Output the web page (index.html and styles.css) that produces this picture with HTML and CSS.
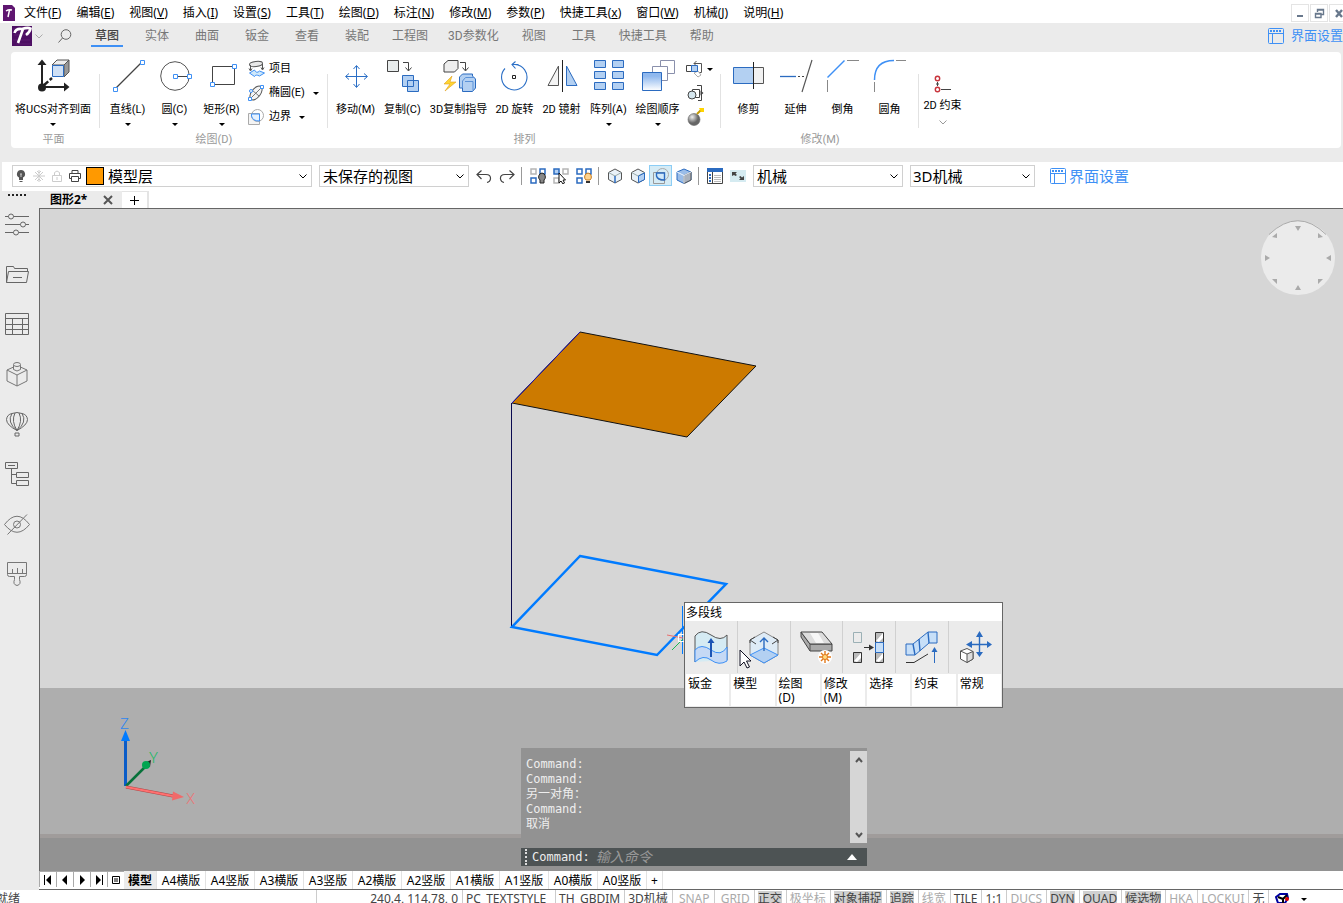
FILE: index.html
```html
<!DOCTYPE html>
<html lang="zh-CN">
<head>
  <meta charset="UTF-8">
  <meta name="viewport" content="width=device-width, initial-scale=1.0">
  <title>图形2</title>
  <link rel="stylesheet" href="styles.css">
</head>
<body>
  <svg class="defs" width="0" height="0">
    <symbol id="i-layout" viewBox="0 0 16 16"><g fill="none" stroke="#3e90f5"><rect x=".5" y=".5" width="15" height="15" rx="1"/><path d="M.5 5.500h15M4.500 5.500v10"/><path d="M2 3h12" stroke-width="2" stroke-dasharray="2 1"/></g></symbol>
    <symbol id="i-chev" viewBox="0 0 8 8"><path d="M.5 2.500L4 6l3.500-3.500" fill="none" stroke="currentColor"/></symbol>
    <symbol id="i-node" viewBox="0 0 5 5"><path d="M.5.5h4v4h-4z" fill="#fff" stroke="#3e90f5"/></symbol>
    <symbol id="i-cube" viewBox="0 0 16 16"><path d="M8 1l6.500 3.500v7L8 15l-6.500-3.500v-7z" fill="#e8f1f8" stroke="#555"/><path d="M1.500 4.500L8 8l6.500-3.500" fill="none" stroke="#9aa"/></symbol>
  </svg>

  <header>
    <nav class="menubar">
      <svg class="app-icon" width="12" height="16" viewBox="0 0 12 16"><path d="M0 0h9l3 3v13H0z" fill="#5f1670"/><path d="M3 6q3-2 6-1M6.500 5L5 12" stroke="#fff" stroke-width="1.500" fill="none"/></svg>
      <a href="#">文件(<u>F</u>)</a>
      <a href="#">编辑(<u>E</u>)</a>
      <a href="#">视图(<u>V</u>)</a>
      <a href="#">插入(<u>I</u>)</a>
      <a href="#">设置(<u>S</u>)</a>
      <a href="#">工具(<u>T</u>)</a>
      <a href="#">绘图(<u>D</u>)</a>
      <a href="#">标注(<u>N</u>)</a>
      <a href="#">修改(<u>M</u>)</a>
      <a href="#">参数(<u>P</u>)</a>
      <a href="#">快捷工具(<u>x</u>)</a>
      <a href="#">窗口(<u>W</u>)</a>
      <a href="#">机械(<u>J</u>)</a>
      <a href="#">说明(<u>H</u>)</a>
      <div class="win-buttons">
        <button aria-label="最小化"><svg width="16" height="16"><path d="M5 11h6" stroke="#68788c" stroke-width="2"/></svg></button>
        <button aria-label="还原"><svg width="16" height="16"><path d="M6.500 7V4.500h6v5H10M5 8.500h5v4H4.500v-4zM6 5h7M4 9h6" fill="none" stroke="#68788c" stroke-width="1.400"/></svg></button>
        <button aria-label="关闭"><svg width="16" height="16"><path d="M6 5l6 7M12 5l-6 7" stroke="#68788c" stroke-width="2.400"/></svg></button>
      </div>
    </nav>

    <nav class="ribbon-tabs">
      <svg class="logo" width="20" height="20" viewBox="0 0 20 20"><path d="M0 0h20v20H0z" fill="#4d0f63"/><path d="M1 3h18M2 9h16M1 14h17M4 18h15" stroke="#64277a" stroke-width=".6"/><path d="M2.500 7Q4 2 10 3q6-2 8.500-.5Q18 6 14 9M11 3L6 17" fill="none" stroke="#fff" stroke-width="2.600"/></svg>
      <svg class="logo-chev" width="8" height="8"><use href="#i-chev"/></svg>
      <svg class="search" width="14" height="14" viewBox="0 0 14 14"><g fill="none" stroke="#666"><circle cx="8" cy="5.500" r="4.800"/><path d="M4.500 9L.5 13.500"/></g></svg>
      <a href="#" class="active">草图</a>
      <a href="#">实体</a>
      <a href="#">曲面</a>
      <a href="#">钣金</a>
      <a href="#">查看</a>
      <a href="#">装配</a>
      <a href="#">工程图</a>
      <a href="#">3D参数化</a>
      <a href="#">视图</a>
      <a href="#">工具</a>
      <a href="#">快捷工具</a>
      <a href="#">帮助</a>
      <button class="ui-config"><svg width="16" height="16"><use href="#i-layout"/></svg>界面设置</button>
    </nav>

    <div class="ribbon">
      <section class="group g-plane">
        <div class="tools">
          <button class="tool">
            <svg width="36" height="36"><g stroke="#222" stroke-width="2" fill="none"><path d="M7 29V5M7 29h24"/><path d="M8 28l9-8" stroke-width="2.400" stroke-dasharray="7 2"/></g><path d="M2.500 7L7 1.500 11.500 7zM29 24.500l5.500 4.500-5.500 4.500z" fill="#222"/><circle cx="7" cy="29.500" r="4" fill="#222"/><path d="M17 7l5-5h12l-5 5z" fill="#eee" stroke="#555"/><path d="M29 7l5-5v12l-5 5z" fill="#999" stroke="#555"/><path d="M17.500 7.500h11v11h-11z" fill="#cfe0f5" stroke="#2b6bc0"/></svg>
            <span>将UCS对齐到面</span><i class="caret"></i>
          </button>
        </div>
        <h3>平面</h3>
      </section>

      <section class="group g-draw">
        <div class="tools">
          <button class="tool">
            <svg width="36" height="36"><path d="M5 31L32 4" stroke="#444" stroke-width="1.200"/><use href="#i-node" x="3" y="29" width="5" height="5"/><use href="#i-node" x="30" y="2" width="5" height="5"/></svg>
            <span>直线(L)</span><i class="caret"></i>
          </button>
          <button class="tool">
            <svg width="36" height="36"><circle cx="18" cy="18" r="14.300" fill="none" stroke="#555"/><path d="M19 18.500h13" stroke="#444"/><use href="#i-node" x="16" y="16" width="5" height="5"/><use href="#i-node" x="30" y="16" width="5" height="5"/></svg>
            <span>圆(C)</span><i class="caret"></i>
          </button>
          <button class="tool">
            <svg width="36" height="36"><path d="M8.500 8.500h22v18h-22z" fill="none" stroke="#444"/><use href="#i-node" x="6" y="24" width="5" height="5"/><use href="#i-node" x="28" y="6" width="5" height="5"/></svg>
            <span>矩形(R)</span><i class="caret"></i>
          </button>
          <div class="small-tools">
            <button><svg width="18" height="18"><ellipse cx="8" cy="4" rx="6.500" ry="2.500" fill="#e8e8e8" stroke="#555" transform="rotate(-6 8 4)"/><path d="M2.500 5v5M14.500 4v5M1 8.500L2.500 11 4 8.500M13 7.500l1.500 2.500L16 7.500" fill="none" stroke="#555"/><path d="M1.500 13l5-3q2 4 5 1l5 2-5 3q-4-2-5 .5z" fill="#cfe8fa" stroke="#3e90f5"/></svg>项目</button>
            <button><svg width="18" height="18"><ellipse cx="8" cy="9" rx="8" ry="4.500" fill="#f4f4f4" stroke="#555" transform="rotate(-52 8 9)"/><path d="M2 15L14 3M4 6l7 6" stroke="#777"/><g fill="#fff" stroke="#3e90f5"><path d="M.5 13.500h3v3h-3zM12.500 1.500h3v3h-3z"/><circle cx="3" cy="7" r="1.500"/></g></svg>椭圆(E)<i class="caret"></i></button>
            <button><svg width="18" height="18"><path d="M.5 5.500h11v11H.5z" fill="#f4f4f4" stroke="#aaa"/><circle cx="9.500" cy="7.500" r="6" fill="none" stroke="#aaa"/><path d="M3.500 6h8v7q-7 0-8-5z" fill="#e6f2ff" stroke="#3e90f5"/></svg>边界<i class="caret"></i></button>
          </div>
        </div>
        <h3>绘图(D)</h3>
      </section>

      <section class="group g-arrange">
        <div class="tools">
          <button class="tool">
            <svg width="36" height="36"><path d="M18.500 8v21M8 18.500h21M15.500 11l3-3.500 3 3.500M15.500 26l3 3.500 3-3.500M11 15.500l-3.500 3 3.500 3M26 15.500l3.500 3-3.500 3" fill="none" stroke="#2b6fc6"/></svg>
            <span>移动(M)</span>
          </button>
          <button class="tool">
            <svg width="36" height="36"><path d="M2.500 2.500h11v11h-11z" fill="#e9eded" stroke="#444"/><path d="M18 4.500h5.500v8M20.500 9.500l3 3.500 3-3.500" fill="none" stroke="#444"/><path d="M17.500 17.500h11v11h-11zM22.500 22.500h11v11h-11z" fill="#b3d0f2" stroke="#2b6bc0"/></svg>
            <span>复制(C)</span>
          </button>
          <button class="tool wide">
            <svg width="36" height="36"><path d="M3 6l4-3.500h10v8L13.500 14H3z" fill="#eee" stroke="#444"/><path d="M19 4.500h5.500v8M21.500 9.500l3 3.500 3-3.500" fill="none" stroke="#444"/><path d="M11 18L3 26h6l-5 7L15 24H9z" fill="#ffd633" stroke="#e0a020" stroke-width=".6"/><path d="M18.500 19l3-3h10v2l3 3v9l-3 3.500H21.500V30h-3z" fill="#b3d0f2" stroke="#2b6bc0"/><path d="M21.500 30v-7l3-3.500h9M24 23.500h8v9" fill="none" stroke="#5b92d8"/></svg>
            <span>3D复制指导</span>
          </button>
          <button class="tool">
            <svg width="36" height="36"><path d="M8 10.500A12.700 12.700 0 1 0 18 6.500M15 6.500h6.500M18.500 3.500L15 6.500l3.500 4" fill="none" stroke="#2b6fc6" stroke-width="1.100"/><path d="M15.500 17.500h3v3h-3z" fill="none" stroke="#222"/></svg>
            <span>2D 旋转</span>
          </button>
          <button class="tool">
            <svg width="36" height="36"><path d="M4 27.500h10.500V8z" fill="#f4f4f4" stroke="#555"/><path d="M18.500 2v32" stroke="#222"/><path d="M33 27.500H22.500V8z" fill="#b3d0f2" stroke="#2b6bc0"/></svg>
            <span>2D 镜射</span>
          </button>
          <button class="tool">
            <svg width="36" height="36"><path d="M3.500 2.500h11v7h-11zM21.500 2.500h11v7h-11zM3.500 13.500h11v7h-11zM21.500 13.500h11v7h-11zM3.500 24.500h11v7h-11zM21.500 24.500h11v7h-11z" fill="#b3d0f2" stroke="#2b6bc0"/></svg>
            <span>阵列(A)</span><i class="caret"></i>
          </button>
          <button class="tool order">
            <svg width="36" height="36"><defs><linearGradient id="og" x1="0" y1="0" x2="0" y2="1"><stop offset=".2" stop-color="#8fb8ee"/><stop offset="1" stop-color="#fff"/></linearGradient></defs><path d="M20.500 2.500h14v13h-14z" fill="#fff" stroke="#8a90ac"/><path d="M12.500 8.500h15v14h-15z" fill="#fff" stroke="#8a90ac"/><path d="M2.500 14.500h19v18h-19z" fill="url(#og)" stroke="#2b6bc0"/></svg>
            <span>绘图顺序</span><i class="caret"></i>
          </button>
          <div class="small-tools">
            <button aria-label="拉伸"><svg width="18" height="18"><path d="M.5 5.500h5v6h-5z" fill="#fff" stroke="#444"/><path d="M8 3.500h7.500v9H13M10.500 1L8 3.500l3 3" fill="none" stroke="#555"/><path d="M8 13l4-2 3 4-3 2z" fill="#fff" stroke="#aaa"/><path d="M5.500 5.500h6v6h-6z" fill="#b3d0f2" stroke="#2b6bc0"/></svg><i class="caret"></i></button>
            <button aria-label="偏移"><svg width="18" height="18"><path d="M6.500 5.500h7v8h-7zM11 1.500h4.500v15H12" fill="none" stroke="#444"/><circle cx="6" cy="11" r="4" fill="#d5e6ee" stroke="#444"/><path d="M14.500 6.500l3 2.500-3 2.500z" fill="#444"/></svg></button>
            <button aria-label="分解"><svg width="18" height="18"><defs><radialGradient id="bomb" cx=".35" cy=".3"><stop offset="0" stop-color="#eee"/><stop offset="1" stop-color="#666"/></radialGradient></defs><circle cx="8" cy="11.500" r="6" fill="url(#bomb)" stroke="#666" stroke-width=".6"/><path d="M11 6l4-4" stroke="#c49a00" stroke-width="2"/><path d="M13 0h5v4h-3z" fill="#ffd400"/></svg></button>
          </div>
        </div>
        <h3>排列</h3>
      </section>

      <section class="group g-modify">
        <div class="tools">
          <button class="tool">
            <svg width="36" height="36"><path d="M22 9.500h10.500v16H22z" fill="#f1f1f1" stroke="#555"/><path d="M2.500 9.500h20v16h-20z" fill="#b3d0f2" stroke="#2b6bc0"/><path d="M22.500 4v27" stroke="#222"/></svg>
            <span>修剪</span>
          </button>
          <button class="tool">
            <svg width="36" height="36"><path d="M2 18.500h16" stroke="#2b6bc0" stroke-width="1.300"/><path d="M20 18.500h6" stroke="#444" stroke-dasharray="2 2"/><path d="M24 34L34 2" stroke="#555" stroke-width="1.200"/></svg>
            <span>延伸</span>
          </button>
          <button class="tool">
            <svg width="36" height="36"><path d="M2.500 19.500L19.500 2.500" stroke="#3e90f5" stroke-width="1.500"/><path d="M22 2.500h12M2.500 22v12" stroke="#888"/></svg>
            <span>倒角</span>
          </button>
          <button class="tool">
            <svg width="36" height="36"><path d="M2.500 22Q2.500 2.500 22 2.500" fill="none" stroke="#3e90f5" stroke-width="1.500"/><path d="M24 2.500h10M2.500 24v10" stroke="#888"/></svg>
            <span>圆角</span>
          </button>
        </div>
        <h3>修改(M)</h3>
      </section>

      <section class="group g-constraint">
        <div class="tools">
          <button class="tool short">
            <svg width="36" height="36"><g fill="#fff" stroke="#c8343c" stroke-width="1.400"><circle cx="12.500" cy="20.500" r="2.200"/><circle cx="12.500" cy="31.500" r="2.200"/></g><path d="M12.500 24v4M11 26h3M16 31.500h10" stroke="#444"/></svg>
            <span>2D 约束</span>
            <svg class="more" width="8" height="8"><use href="#i-chev"/></svg>
          </button>
        </div>
      </section>
    </div>

    <div class="toolbar">
      <div class="combo layer">
        <svg width="10" height="14" viewBox="0 0 10 14"><path d="M5 1a4 4 0 0 1 2 7.500V11H3V8.500A4 4 0 0 1 5 1z" fill="#555"/><path d="M3.500 12.500h3" stroke="#555"/><path d="M4 5h2M5 5v3" stroke="#ccc"/></svg>
        <svg width="12" height="12"><path d="M6 0v12M0 6h12M2 2l8 8M10 2l-8 8M4 1l2 2 2-2M4 11l2-2 2 2" fill="none" stroke="#ccc"/></svg>
        <svg width="10" height="12"><path d="M.5 5.500h9v6h-9zM2.500 5V2.500q2.500-3 5 0V5M5 7v3" fill="none" stroke="#ccc"/></svg>
        <svg width="12" height="12"><path d="M3 3.500v-3h6v3M2.500 8.500h-2v-5h11v5h-2M2.500 6.500h7v5h-7z" fill="none" stroke="#444"/></svg>
        <span class="swatch"></span>
        <select aria-label="图层"><option>模型层</option></select>
        <svg class="arrow" width="8" height="8"><use href="#i-chev"/></svg>
      </div>
      <div class="combo view"><select aria-label="视图"><option>未保存的视图</option></select><svg class="arrow" width="8" height="8"><use href="#i-chev"/></svg></div>
      <div class="icons">
        <button aria-label="撤消"><svg width="16" height="16"><path d="M5.500 2.500L1 6.500l4.500 4.500M1.500 6.500H10q5 0 4.500 4.500-.5 3-3.500 3.500" fill="none" stroke="#444" stroke-width="1.200"/></svg></button>
        <button aria-label="重做"><svg width="16" height="16"><path d="M10.500 2.500L15 6.500 10.500 11M14.500 6.500H6q-5 0-4.500 4.500.5 3 3.500 3.500" fill="none" stroke="#444" stroke-width="1.200"/></svg></button>
      </div>
      <div class="icons">
        <button aria-label="隔离"><svg width="16" height="16"><g fill="#fff" stroke="#b5b5b5" stroke-width="1.500"><path d="M1 1h5v5H1z"/><path d="M10 1h5v5h-5zM1 10h5v5H1z" stroke="#2b6bc0"/></g><path d="M12 5a4 4 0 0 1 2 7v3h-4v-3a4 4 0 0 1 2-7z" fill="#888" stroke="#222"/></svg></button>
        <button aria-label="隐藏"><svg width="16" height="16"><g fill="#fff" stroke="#b5b5b5" stroke-width="1.500"><path d="M1 1h5v5H1z" fill="#b3d0f2" stroke="#2b6bc0"/><path d="M10 1h5v5h-5zM1 10h5v5H1z"/></g><path d="M6 5v10l2-2 2 3 1.500-1-1.500-3h2.500z" fill="#fff" stroke="#111"/></svg></button>
        <button aria-label="全部显示"><svg width="16" height="16"><path d="M1 1h5v5H1zM10 1h5v5h-5zM1 10h5v5H1z" fill="#fff" stroke="#2b6bc0" stroke-width="1.500"/><path d="M12 5a4 4 0 0 1 2 7h-4a4 4 0 0 1 2-7z" fill="#ffd490" stroke="#c67a1c"/><path d="M10 13h4v2h-4z" fill="#333"/></svg></button>
      </div>
      <div class="icons">
        <button aria-label="选择边"><svg width="16" height="16"><use href="#i-cube"/><path d="M8 8v7" stroke="#2b6bc0" stroke-width="1.500"/></svg></button>
        <button aria-label="选择面"><svg width="16" height="16"><use href="#i-cube"/><path d="M8.500 8L14.500 5v6.500l-6 3z" fill="#b3d0f2" stroke="#2b6bc0"/></svg></button>
        <button aria-label="检测边界" class="on"><svg width="16" height="16"><path d="M.5 4.500h11v11H.5z" fill="none" stroke="#999"/><circle cx="9.500" cy="6.500" r="6" fill="none" stroke="#aaa"/><path d="M3.500 5h8v7q-7 0-8-4z" fill="#d0e8fa" stroke="#2b6bc0" stroke-width="1.400"/></svg></button>
        <button aria-label="选择实体"><svg width="16" height="16"><path d="M8 1l7 3v8l-7 3.500L1 12V4z" fill="#9bbde8" stroke="#2b6bc0"/><path d="M8 7.500l7-3.500v8l-7 3.500z" fill="#aab2bd" stroke="#555"/><path d="M1 4l7 3.500L15 4M8 7.500v8" fill="none" stroke="#eef5ff"/></svg></button>
      </div>
      <div class="icons">
        <button aria-label="特性面板"><svg width="16" height="16"><path d="M.5.5h15v15H.5z" fill="#fff" stroke="#444"/><path d="M0 0h16v4H0z" fill="#2b6bc0"/><path d="M2 7h2M2 10h2M2 13h2" stroke="#2b6bc0" stroke-width="2"/><path d="M5.500 4v11" stroke="#444"/><path d="M7 7.500h7M7 9.500h7M7 11.500h7M7 13.500h7" stroke="#bbb"/></svg></button>
        <button aria-label="全屏"><svg width="16" height="16"><path d="M0 2h16v12H0z" fill="#d5ebf1"/><path d="M2 4h5L5.500 5.500 7 7 5.500 8 4 7 2 8zM14 12H9l1.500-1.500L9 9l1.500-1L12 9.500 14 8z" fill="#444"/></svg></button>
      </div>
      <div class="combo space"><select aria-label="行业"><option>机械</option></select><svg class="arrow" width="8" height="8"><use href="#i-chev"/></svg></div>
      <div class="combo workspace"><select aria-label="工作空间"><option>3D机械</option></select><svg class="arrow" width="8" height="8"><use href="#i-chev"/></svg></div>
      <button class="ui-config large"><svg width="16" height="16"><use href="#i-layout"/></svg>界面设置</button>
    </div>
  </header>

  <main>
    <aside class="sidebar">
      <div class="grip"></div>
      <button aria-label="特性"><svg width="26" height="26"><g fill="#ebebeb" stroke="#666"><path d="M1 5.500h24M1 13.500h24M1 21.500h24"/><circle cx="7" cy="5.500" r="2.500"/><circle cx="19" cy="13.500" r="2.500"/><circle cx="12" cy="21.500" r="2.500"/></g></svg></button>
      <button aria-label="文件夹"><svg width="26" height="26"><path d="M2.500 21.500v-16h7l1 2h13v3M2.500 21.500l2-11h20l-2 11zM9 16.500h9" fill="none" stroke="#666"/></svg></button>
      <button aria-label="表格"><svg width="26" height="26"><path d="M1.500 2.500h23v21h-23zM1.500 7.500h23M1.500 13.500h23M1.500 18.500h23M8.500 7v16M18.500 7v16" fill="none" stroke="#666"/></svg></button>
      <button aria-label="组件"><svg width="26" height="26"><path d="M13 4.500l10 4.500v11l-10 5-10-5V9zM3 9l10 5 10-5M13 14v11" fill="#ebebeb" stroke="#777"/><path d="M9.500 4v4.500q3.500 3 7 0V4" fill="#ebebeb" stroke="#777"/><ellipse cx="13" cy="3.500" rx="3.500" ry="2" fill="#ebebeb" stroke="#777"/></svg></button>
      <button aria-label="渲染"><svg width="26" height="26"><path d="M13 19.500Q2.500 14 2.500 8.500 3 3.500 8 2.500q5-2 10 0 5 1 5.500 6Q23.500 14 13 19.500zM8 2.500Q2.500 11 13 19.500 7 10 11 2M18 2.500q5.500 8.500-5 17 6-9.500 2-17.500M11 22h4v3h-4z" fill="none" stroke="#666"/></svg></button>
      <button aria-label="结构"><svg width="26" height="26"><path d="M1.500 1.500h12v6h-12zM4 4.500h7M7.500 8v14.500h5M7.500 13.500h5M12.500 11.500h12v5h-12zM12.500 19.500h12v5h-12z" fill="none" stroke="#666"/></svg></button>
      <button aria-label="可见性"><svg width="26" height="26"><path d="M.5 13.500Q13-3 25.500 13.500 13 29 .5 13.500zM3.500 23.500L23 3.500" fill="none" stroke="#777"/><circle cx="13" cy="13.500" r="3.500" fill="none" stroke="#777"/></svg></button>
      <button aria-label="材质"><svg width="26" height="26"><path d="M3.500 1.500h19v12q0 2-2 2h-5v3q2 5-2.500 6-4.500-1-2.500-6v-3h-5q-2 0-2-2zM3.500 12.500h19M8.500 12V8M13.500 12V7M18.500 12V8" fill="none" stroke="#777"/></svg></button>
    </aside>

    <div class="document">
      <div class="doc-tabs">
        <div class="doc-tab"><a href="#">图形2*</a><button aria-label="关闭图形"><svg width="10" height="10"><path d="M1 1l8 8M9 1L1 9" stroke="#555" stroke-width="2"/></svg></button></div>
        <button class="new-tab" aria-label="新建"><svg width="9" height="9"><path d="M4.500 0v9M0 4.500h9" stroke="#000"/></svg></button>
      </div>

      <div class="canvas">
        <svg class="scene" width="760" height="620">
          <path d="M540 123l176 34-69 71-175-34z" fill="#cc7a00" stroke="#111"/>
          <path d="M540 123l-68 71" stroke="#2010b0"/>
          <path d="M471.500 194v224" stroke="#0a0a50"/>
          <path d="M540 347l146 28-69 71-145-28z" fill="none" stroke="#007bff" stroke-width="2.500"/>
          <path d="M642.500 397v48" stroke="#007bff"/>
          <path d="M627 426l16 3" stroke="#e87070"/>
          <path d="M632 441l11-11" stroke="#1db954"/>
          <path d="M638.500 425.500h7v7h-7z" fill="none" stroke="#fff"/>
          <!-- UCS axes -->
          <path d="M85.500 577V529" stroke="#0a5cc8" stroke-width="3"/>
          <path d="M81 532l4.500-11 4.500 11z" fill="#007bff"/>
          <path d="M86 577l19-19" stroke="#07713a" stroke-width="2.500"/>
          <path d="M104 554l7-3-1 7z" fill="#222"/><circle cx="106" cy="556" r="4" fill="#00a550"/>
          <path d="M86 578l47 9" stroke="#b04848" stroke-width="3"/><path d="M86 578l47 9" stroke="#ff7070" stroke-width="2"/>
          <path d="M133 582.500l11 5.500-12 3.500z" fill="#f06a6a"/>
          <text class="axis-z" x="80" y="520">Z</text>
          <text class="axis-y" x="109" y="554">Y</text>
          <text class="axis-x" x="146" y="595">X</text>
        </svg>

        <svg class="look-from" width="76" height="76" viewBox="0 0 76 76"><circle cx="38" cy="38" r="37" fill="#ebebeb"/><path d="M9 14.500Q38-13 66 14.500" fill="none" stroke="#aaa"/><path d="M35 6h6l-3 5zM35 70h6l-3-5zM5 35v6l5-3zM71 35v6l-5-3zM12 17l5-4v5zM63 17l-5-4v5zM12 59h5v5zM63 59h-5v5z" fill="#aaa"/></svg>

        <div class="quad">
          <h2>多段线</h2>
          <div class="quad-tools">
            <button aria-label="放样"><svg width="36" height="36"><path d="M2 33V7Q8-1 18 6t16 0v25" fill="#d5ebf3" stroke="#555"/><path d="M2 33V21q6-7 16 0t16-3v14q-8 5-16-1T2 33z" fill="#c5d9f5" stroke="#3e90f5"/><path d="M18 28V13" stroke="#1c55b4" stroke-width="2"/><path d="M14.500 14L18 9l3.500 5z" fill="#1c55b4"/></svg></button>
            <button aria-label="拉伸"><svg width="36" height="36"><path d="M18 3l14 8v15l-14 8-14-8V11z" fill="#deebf6" stroke="#888"/><path d="M4 26l14-7 14 7-14 8z" fill="#b3d0f2" stroke="#3e90f5"/><path d="M4 11l6 4M32 11l-6 4M4 14v-3l5-3M32 14v-3l-5-3" fill="none" stroke="#444"/><path d="M18 22V9M14 13l4-4 4 4" fill="none" stroke="#2b6bc0" stroke-width="1.400"/></svg></button>
            <button aria-label="创建实体"><svg width="36" height="36"><path d="M2 3l9 12h22v7H11L2 8z" fill="#aaa" stroke="#444"/><path d="M2 3h21l10 12H11z" fill="#ddd" stroke="#444"/><path d="M11 15v7" stroke="#555"/><path d="M11 4l6 10h8L19 4z" fill="#f7f7f7"/><circle cx="26" cy="28" r="7" fill="#fff"/><path d="M26 22v12M20 28h12M22 24l8 8M30 24l-8 8" stroke="#e27a1c" stroke-width="1.400"/><circle cx="26" cy="28" r="2.500" fill="#ffdb82" stroke="#e27a1c"/></svg></button>
            <button aria-label="阵列选择"><svg width="36" height="36"><path d="M2.500 3.500h8v10h-8z" fill="none" stroke="#9bb0b5"/><path d="M2.500 23.500h8v10h-8zM24.500 3.500h8v10h-8zM24.500 23.500h8v10h-8z" fill="#bbb" stroke="#333"/><path d="M3 32l7-8v5l-4 4zM25 12l7-8v5l-4 4zM25 32l7-8v5l-4 4z" fill="#fff"/><path d="M24.500 13.500h8v10h-8z" fill="#c7dff8" stroke="#2b6bc0"/><path d="M13 18.500h7" stroke="#333"/><path d="M18 15.500l5 3-5 3z" fill="#333"/></svg></button>
            <button aria-label="钣金弯边"><svg width="36" height="36"><path d="M2 15h7L24 3h9v11h-8L11 26H2z" fill="#c7dff8" stroke="#2b6bc0"/><path d="M9 15l2 11M15 10l1 12M24 3l1 11" stroke="#2b6bc0" stroke-width="1.400"/><path d="M2 33.500h8L24 25" fill="none" stroke="#333"/><path d="M30.500 34V21" stroke="#2b6bc0"/><path d="M27.500 23l3-5 3 5z" fill="#2b6bc0"/></svg></button>
            <button aria-label="移动"><svg width="36" height="36"><path d="M21.500 5v20M11 15.500h21" stroke="#2b6bc0" stroke-width="1.400"/><path d="M18 8l3.500-6L25 8zM18 23l3.500 5 3.500-5zM14 12l-6 3.500 6 3.500zM29 12l5 3.500-5 3.500z" fill="#2b6bc0"/><path d="M2.500 22L9 19.500l6 3V30l-6 3.500L2.500 30z" fill="#fff" stroke="#555"/><path d="M2.500 22L9 25l6-2.500V30l-6 3.500V25" fill="#ddd" stroke="#555"/></svg></button>
          </div>
          <div class="quad-tabs">
            <button>钣金</button>
            <button>模型</button>
            <button>绘图<br>(D)</button>
            <button>修改<br>(M)</button>
            <button>选择</button>
            <button>约束</button>
            <button>常规</button>
          </div>
        </div>

        <svg class="pointer" width="13" height="20"><path d="M1 1v16l4-4 3 6 2.500-1-3-6H12z" fill="#fff" stroke="#112"/></svg>

        <div class="command">
          <div class="history">
            <pre>Command:
Command:
另一对角：
Command:
取消</pre>
            <div class="scroll">
              <svg width="8" height="8"><path d="M1 6l3-3.500L7 6" fill="none" stroke="#555" stroke-width="2"/></svg>
              <svg width="8" height="8"><path d="M1 2l3 3.500L7 2" fill="none" stroke="#555" stroke-width="2"/></svg>
            </div>
          </div>
          <div class="prompt">
            <label for="cmd">Command:</label>
            <input id="cmd" type="text" placeholder="输入命令">
            <svg width="10" height="6"><path d="M0 6l5-6 5 6z" fill="#fff"/></svg>
          </div>
        </div>
      </div>

      <nav class="layout-tabs">
        <button aria-label="第一个"><svg width="10" height="10"><path d="M1.500 0v10" stroke="#000"/><path d="M8 0v10L3 5z"/></svg></button>
        <button aria-label="上一个"><svg width="10" height="10"><path d="M7 0v10L2 5z"/></svg></button>
        <button aria-label="下一个"><svg width="10" height="10"><path d="M3 0v10l5-5z"/></svg></button>
        <button aria-label="最后一个"><svg width="10" height="10"><path d="M8.500 0v10" stroke="#000"/><path d="M2 0v10l5-5z"/></svg></button>
        <button aria-label="列表"><svg width="10" height="10"><path d="M1.500 1.500h7v7h-7zM3 4h4M3 6h4" fill="none" stroke="#000"/></svg></button>
        <a href="#" class="active">模型</a>
        <a href="#">A4横版</a>
        <a href="#">A4竖版</a>
        <a href="#">A3横版</a>
        <a href="#">A3竖版</a>
        <a href="#">A2横版</a>
        <a href="#">A2竖版</a>
        <a href="#">A1横版</a>
        <a href="#">A1竖版</a>
        <a href="#">A0横版</a>
        <a href="#">A0竖版</a>
        <a href="#" class="add">+</a>
      </nav>
    </div>
  </main>

  <footer class="status">
    <span class="ready">就绪</span>
    <span class="coords">240.4, 114.78, 0</span>
    <button class="text-style">PC_TEXTSTYLE</button>
    <button>TH_GBDIM</button>
    <button>3D机械</button>
    <button class="off">&nbsp;SNAP</button>
    <button class="off">&nbsp;GRID</button>
    <button class="on"><b>正交</b></button>
    <button class="off">极坐标</button>
    <button class="on"><b>对象捕捉</b></button>
    <button class="on"><b>追踪</b></button>
    <button class="off">线宽</button>
    <button>TILE</button>
    <button>1:1</button>
    <button class="off">DUCS</button>
    <button class="on"><b>DYN</b></button>
    <button class="on"><b>QUAD</b></button>
    <button class="on"><b>候选物</b></button>
    <button class="off">HKA</button>
    <button class="off">LOCKUI</button>
    <button>无</button>
    <button class="tips" aria-label="提示"><svg width="14" height="12"><path d="M1 4l4-3h7l1 4-3 5H3z" fill="#fff" stroke="#0000a0" stroke-width="2"/><path d="M3 4l5 2v4M8 6l4-4" fill="none" stroke="#000" stroke-width="2"/><circle cx="12" cy="6" r="2" fill="#e00000"/></svg></button>
    <button class="menu" aria-label="菜单"><i class="caret"></i></button>
  </footer>
</body>
</html>
```

FILE: styles.css
```css
* {
  box-sizing: border-box;
}
body {
  margin: 0;
  height: 100vh;
  display: flex;
  flex-direction: column;
  overflow: hidden;
  background: #ebebeb;
  color: #000;
  font-family: "Noto Sans", "Noto Sans CJK SC", sans-serif;
  font-size: 12px;
  line-height: 16px;
}
a {
  color: inherit;
  text-decoration: none;
}
button, select, input {
  font: inherit;
  color: inherit;
  background: none;
  border: none;
  border-radius: 0;
  padding: 0;
  margin: 0;
}
svg {
  display: block;
  flex: none;
}
h2, h3, pre {
  margin: 0;
  font: inherit;
}
.defs {
  position: absolute;
}
.caret {
  border: 3px solid transparent;
  border-top-color: #000;
  border-bottom: none;
}

/* menu bar */
.menubar {
  display: flex;
  align-items: center;
  gap: 15px;
  height: 23px;
  padding-left: 3px;
  padding-top: 2px;
  background: #fff;
  overflow: hidden;
  white-space: nowrap;
}
.app-icon {
  margin-right: -6px;
}
.win-buttons {
  display: flex;
  gap: 1px;
  margin-left: auto;
  margin-right: -4px;
}
.win-buttons button {
  border: 1px solid #e4e4e4;
}

/* ribbon */
.ribbon-tabs {
  display: flex;
  align-items: center;
  height: 29px;
  padding: 0 0 4px 12px;
  color: #777;
  white-space: nowrap;
  overflow: hidden;
  font-family: Roboto, "Noto Sans CJK SC", sans-serif;
}
.logo-chev {
  margin-left: 3px;
  color: #aaa;
}
.search {
  margin: 0 10px 0 15px;
}
.ribbon-tabs a {
  min-width: 50px;
  height: 22px;
  padding: 3px 10px 0;
  text-align: center;
}
.ribbon-tabs .active {
  color: #444;
  font-weight: 500;
  padding: 3px 4px 0;
  min-width: 32px;
  margin: 0 9px;
  border-bottom: 2px solid #3e90f5;
}
.ui-config {
  display: flex;
  align-items: center;
  gap: 7px;
  margin-left: auto;
  color: #3e90f5;
  font-size: 13px;
}
.ui-config.large {
  gap: 3px;
  margin-left: 15px;
  font-size: 15px;
}
.ribbon {
  display: flex;
  height: 96px;
  margin: 0 2px 0 11px;
  background: #fff;
  border-radius: 4px;
  font-family: Roboto, "Noto Sans CJK SC", sans-serif;
  font-size: 11px;
  white-space: nowrap;
}
.group {
  display: flex;
  flex-direction: column;
  justify-content: space-between;
  padding: 6px 4px 0;
  background: linear-gradient(#e2e2e2, #e2e2e2) right 22px / 1px 54px no-repeat;
}
.group h3 {
  color: #999;
  text-align: center;
}
.g-plane {
  width: 89px;
  padding-left: 0;
}
.g-draw {
  width: 228px;
}
.g-arrange {
  width: 393px;
}
.g-modify {
  width: 198px;
}
.g-constraint {
  background: none;
  padding-left: 0;
}
.tools {
  display: flex;
}
.tool {
  display: flex;
  flex-direction: column;
  align-items: center;
  width: 47px;
}
.g-plane .tool {
  width: 84px;
}
.tool span {
  margin-top: 8px;
}
.tool .caret {
  margin-top: 5px;
}
.tool.wide {
  width: 65px;
}
.tool.order {
  width: 51px;
}
.tool.short span {
  margin-top: 4px;
}
.more {
  margin-top: 4px;
  color: #999;
}
.small-tools {
  display: flex;
  flex-direction: column;
  gap: 6px;
  padding: 2px 0 0 3px;
}
.small-tools button {
  display: flex;
  align-items: center;
  gap: 3px;
}
.small-tools .caret {
  margin-left: 5px;
}
.g-arrange .small-tools .caret {
  margin-left: 0;
}

/* toolbar */
.toolbar {
  display: flex;
  align-items: center;
  height: 29px;
  margin: 14px 0 0 2px;
  padding: 0 0 2px 10px;
  background: #fff;
  white-space: nowrap;
}
.combo {
  display: flex;
  align-items: center;
  height: 22px;
  margin-right: 7px;
  padding: 0 4px 0 3px;
  border: 1px solid #d0d0d0;
}
.combo select {
  flex: 1;
  min-width: 0;
  height: 20px;
  appearance: none;
  font-size: 15px;
  line-height: 20px;
}
.combo.layer {
  width: 300px;
  gap: 7px;
}
.combo.layer select {
  margin-left: -3px;
}
.combo.view {
  width: 150px;
  margin-right: 3px;
}
.combo.space {
  width: 150px;
  margin-left: 1px;
}
.combo.workspace {
  width: 125px;
  margin-right: 0;
  padding-left: 2px;
}
.swatch {
  width: 18px;
  height: 18px;
  margin-left: -2px;
  background: #f90;
  border: 1px solid #000;
}
.icons {
  display: flex;
  padding-right: 3px;
}
.icons + .icons {
  padding-left: 5px;
  background: linear-gradient(#999, #999) left center / 1px 18px no-repeat;
}
.icons button {
  display: flex;
  align-items: center;
  justify-content: center;
  width: 23px;
  height: 21px;
  border: 1px solid transparent;
}
.icons .on {
  background: #d5ebf5;
  border-color: #8ccdf5;
}

/* work area */
main {
  flex: 1;
  display: flex;
  min-height: 0;
}
.sidebar {
  width: 39px;
  padding: 3px 4px;
}
.grip {
  width: 18px;
  margin: 0 4px 15px;
  border-top: 2px dotted #222;
}
.sidebar button {
  display: block;
  height: 26px;
  margin-bottom: 24px;
}
.document {
  flex: 1;
  display: flex;
  flex-direction: column;
  min-width: 0;
}
.doc-tabs {
  display: flex;
  height: 17px;
  background: #fff;
}
.doc-tab {
  display: flex;
  align-items: center;
  justify-content: space-between;
  width: 83px;
  padding: 0 9px 0 11px;
  background: #ebebeb;
  font-weight: bold;
}
.new-tab {
  display: flex;
  align-items: center;
  justify-content: center;
  width: 27px;
  border: 1px solid #e4e4e4;
  border-width: 1px 2px 0 0;
}
.canvas {
  position: relative;
  flex: 1;
  border: 1px solid #666;
  border-width: 1px 0 0 1px;
  overflow: hidden;
  background: linear-gradient(#d6d6d6 72.4%, #aeaeae 72.4%, #aeaeae 94.4%, #a09c9b 94.4%, #a09c9b 95%, #929292 95%);
}
.scene {
  position: absolute;
  left: 0;
  top: 0;
}
.scene text {
  font-size: 15px;
  font-weight: 300;
  font-family: Roboto, sans-serif;
}
.axis-z {
  fill: #2f86ee;
}
.axis-y {
  fill: #22b865;
}
.axis-x {
  fill: #e87878;
}
.look-from {
  position: absolute;
  right: 7px;
  top: 11px;
}

/* quad cursor menu */
.quad {
  position: absolute;
  left: 644px;
  top: 393px;
  width: 319px;
  border: 1px solid #666;
  background: #ebebeb;
}
.quad h2 {
  height: 18px;
  padding: 2px 1px 0;
  background: #fff;
}
.quad-tools {
  display: grid;
  grid-template-columns: repeat(6, 1fr);
  height: 52px;
}
.quad-tools button {
  display: flex;
  align-items: center;
  justify-content: center;
  border-right: 1px solid #d0d0d0;
}
.quad-tools button:last-child {
  border-right: none;
}
.quad-tabs {
  display: grid;
  grid-template-columns: repeat(7, 1fr);
  gap: 2px;
  padding: 1px;
}
.quad-tabs button {
  display: flex;
  align-items: flex-start;
  height: 32px;
  padding: 3px 2px 0;
  background: #fff;
  line-height: 14px;
  text-align: left;
}
.pointer {
  position: absolute;
  left: 699px;
  top: 440px;
}

/* command line */
.command {
  position: absolute;
  left: 481px;
  bottom: 5px;
  width: 346px;
  font-family: "DejaVu Sans Mono", "Noto Sans CJK SC", monospace;
  color: #eee;
}
.history {
  display: flex;
  justify-content: space-between;
  height: 100px;
  padding: 3px 0 5px 5px;
  background: #929292;
}
.history pre {
  padding-top: 6px;
  line-height: 15px;
}
.scroll {
  display: flex;
  flex-direction: column;
  justify-content: space-between;
  align-items: center;
  width: 17px;
  padding: 5px 0 4px;
  background: #d6d6d6;
}
.prompt {
  display: flex;
  align-items: center;
  height: 18px;
  padding: 0 10px 0 4px;
  background: #4d5354;
}
.prompt label {
  padding-left: 5px;
  border-left: 2px dotted #ddd;
}
.prompt input {
  flex: 1;
  min-width: 0;
  padding-left: 6px;
  font-size: 14px;
  font-style: italic;
}
.prompt input::placeholder {
  color: #999;
}

/* layout tabs */
.layout-tabs {
  display: flex;
  height: 19px;
  border-bottom: 1px solid #666;
  background: #fff;
  white-space: nowrap;
}
.layout-tabs button {
  display: flex;
  align-items: center;
  justify-content: center;
  width: 17px;
  margin-bottom: 2px;
  border: 1px solid #aaa;
  border-width: 1px 0 0 1px;
}
.layout-tabs a {
  width: 49px;
  padding-top: 2px;
  border-right: 1px solid #e2e2e2;
  text-align: center;
}
.layout-tabs .active {
  width: 33px;
  background: #ebebeb;
  font-weight: bold;
}
.layout-tabs .add {
  width: 16px;
}

/* status bar */
.status {
  display: flex;
  height: 13px;
  overflow: hidden;
  background: #fff;
  color: #444;
  white-space: nowrap;
}
.status > * {
  display: flex;
  align-items: center;
  height: 18px;
  padding: 0 4px 0 3px;
  border-right: 1px solid #ccc;
  flex: none;
}
.status .ready {
  width: 317px;
  padding: 0;
  text-indent: -4px;
}
.status .coords {
  width: 146px;
  justify-content: flex-end;
}
.status .text-style {
  width: 93px;
}
.status .off {
  color: #aaa;
}
.status b {
  background: #d0d0d0;
  font-weight: normal;
}
.status .tips {
  padding-left: 6px;
  border: none;
}
.status .menu {
  padding-left: 8px;
  border: none;
}
```
